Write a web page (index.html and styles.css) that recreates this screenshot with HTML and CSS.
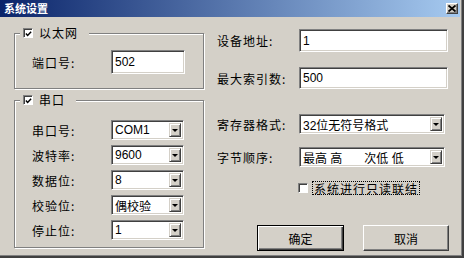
FILE: index.html
```html
<!DOCTYPE html>
<html lang="zh-CN">
<head>
    <meta charset="UTF-8">
    <meta name="viewport" content="width=device-width, initial-scale=1.0">
    <title>系统设置</title>
    <link rel="stylesheet" href="styles.css">
</head>
<body>
    <div class="window">
        <div class="titlebar">
            <span class="title">系统设置</span>
            <span class="close-btn">
                <svg width="8" height="7" viewBox="0 0 8 7"><path d="M0.5 0.5 L7.5 6.5 M7.5 0.5 L0.5 6.5" stroke="#000" stroke-width="1.8"/></svg>
            </span>
        </div>
        <div class="content">
            <div class="left-col">
                <fieldset class="group group-eth">
                    <legend><span class="check"><svg width="8" height="8" viewBox="0 0 8 8"><path d="M1 3.5 L3 5.6 L7 1.4" fill="none" stroke="#000" stroke-width="1.7"/></svg></span>以太网</legend>
                    <div class="row">
                        <span class="lbl">端口号:</span>
                        <div class="edit edit-port">502</div>
                    </div>
                </fieldset>
                <fieldset class="group group-com">
                    <legend><span class="check"><svg width="8" height="8" viewBox="0 0 8 8"><path d="M1 3.5 L3 5.6 L7 1.4" fill="none" stroke="#000" stroke-width="1.7"/></svg></span>串口</legend>
                    <div class="row">
                        <span class="lbl">串口号:</span>
                        <div class="combo combo-small"><span class="value">COM1</span><span class="drop"></span></div>
                    </div>
                    <div class="row">
                        <span class="lbl">波特率:</span>
                        <div class="combo combo-small"><span class="value">9600</span><span class="drop"></span></div>
                    </div>
                    <div class="row">
                        <span class="lbl">数据位:</span>
                        <div class="combo combo-small"><span class="value">8</span><span class="drop"></span></div>
                    </div>
                    <div class="row">
                        <span class="lbl">校验位:</span>
                        <div class="combo combo-small"><span class="value">偶校验</span><span class="drop"></span></div>
                    </div>
                    <div class="row">
                        <span class="lbl">停止位:</span>
                        <div class="combo combo-small"><span class="value">1</span><span class="drop"></span></div>
                    </div>
                </fieldset>
            </div>

            <div class="right-col">
                <div class="rrow rrow-addr">
                    <span class="rlbl">设备地址:</span>
                    <div class="edit edit-wide edit-addr">1</div>
                </div>
                <div class="rrow rrow-index">
                    <span class="rlbl">最大索引数:</span>
                    <div class="edit edit-wide">500</div>
                </div>
                <div class="rrow rrow-format">
                    <span class="rlbl">寄存器格式:</span>
                    <div class="combo combo-wide"><span class="value">32位无符号格式</span><span class="drop"></span></div>
                </div>
                <div class="rrow rrow-order">
                    <span class="rlbl">字节顺序:</span>
                    <div class="combo combo-wide"><span class="value">最高 高<span class="gap"></span>次低 低</span><span class="drop"></span></div>
                </div>
                <div class="rrow rrow-readonly">
                    <span class="check check-plain"></span>
                    <span class="focus-label">系统进行只读联结</span>
                </div>
                <div class="buttons">
                    <div class="btn btn-default">确定</div>
                    <div class="btn">取消</div>
                </div>
            </div>
        </div>
    </div>
</body>
</html>
```

FILE: styles.css
```css
html, body {
    margin: 0;
    padding: 0;
    background-color: #d4d0c8;
}
body {
    font-family: "Liberation Sans", "Noto Sans CJK SC", sans-serif;
    font-size: 12px;
    color: #000;
}
.window {
    width: 464px;
    height: 258px;
    box-sizing: border-box;
    background-color: #d4d0c8;
    border-right: 2px solid #404040;
    border-bottom: 2px solid #404040;
    box-shadow: inset -1px -1px #808080;
    display: flex;
    flex-direction: column;
}
.titlebar {
    height: 17px;
    margin-right: 2px;
    padding: 0 2px 0 4px;
    background: linear-gradient(to right, #0a246a, #a6caf0);
    display: flex;
    align-items: center;
    justify-content: space-between;
}
.title {
    color: #fff;
    font-family: "Noto Sans CJK SC", sans-serif;
    font-weight: bold;
    font-size: 11px;
    line-height: 17px;
}
.close-btn {
    width: 12px;
    height: 11px;
    box-sizing: border-box;
    background-color: #d4d0c8;
    border: 1px solid;
    border-color: #fff #404040 #404040 #fff;
    box-shadow: inset -1px -1px #808080;
    display: flex;
    align-items: center;
    justify-content: center;
}
.content {
    display: flex;
    padding: 9px 0 0 14px;
}
.left-col {
    width: 190px;
}
.group {
    margin: 0;
    padding: 10px 0 14px 0;
    border: 1px solid #808080;
    box-shadow: inset 1px 1px #fff, 1px 1px #fff;
    min-width: 0;
}
.group legend {
    margin-left: 5px;
    padding: 0 11px 0 3px;
    line-height: 14px;
    height: 14px;
    display: flex;
    align-items: center;
    background-color: #d4d0c8;
    font-family: "Noto Sans CJK SC", sans-serif;
    letter-spacing: 1px;
}
.group-com {
    margin-top: 4px;
    padding: 13px 0 7px 0;
}
.group-com .row + .row {
    margin-top: 5px;
}
.check {
    width: 10px;
    height: 10px;
    box-sizing: border-box;
    margin-right: 6px;
    background-color: #fff;
    border: 1px solid;
    border-color: #808080 #fff #fff #808080;
    box-shadow: inset 1px 1px #404040;
    display: flex;
    align-items: center;
    justify-content: center;
}
.check svg {
    margin: 1px 0 0 1px;
}
.row {
    display: flex;
    align-items: center;
    padding-left: 17px;
}
.lbl {
    width: 79px;
    font-family: "Noto Sans CJK SC", sans-serif;
    letter-spacing: 1px;
}
.edit {
    height: 22px;
    box-sizing: border-box;
    padding-left: 3px;
    background-color: #fff;
    border: 1px solid;
    border-color: #808080 #fff #fff #808080;
    box-shadow: inset 1px 1px #404040, inset -1px -1px #d4d0c8;
    display: flex;
    align-items: center;
}
.edit-port {
    width: 74px;
    height: 24px;
}
.combo {
    height: 20px;
    box-sizing: border-box;
    background-color: #fff;
    border: 1px solid;
    border-color: #808080 #fff #fff #808080;
    box-shadow: inset 1px 1px #404040, inset -1px -1px #d4d0c8;
    display: flex;
    align-items: center;
    padding: 2px;
}
.combo .value {
    flex: 1;
    padding-left: 1px;
    font-family: "Liberation Sans", "Noto Sans CJK SC", sans-serif;
    white-space: nowrap;
}
.combo .gap {
    display: inline-block;
    width: 22px;
}
.combo .drop {
    width: 12px;
    align-self: stretch;
    box-sizing: border-box;
    background-color: #d4d0c8;
    border: 1px solid;
    border-color: #d4d0c8 #404040 #404040 #d4d0c8;
    box-shadow: inset 1px 1px #fff, inset -1px -1px #808080;
    display: flex;
    align-items: center;
    justify-content: center;
}
.combo .drop::after {
    content: "";
    border-left: 3px solid transparent;
    border-right: 3px solid transparent;
    border-top: 3px solid #000;
}
.combo-small {
    width: 73px;
}
.right-col {
    margin-left: 13px;
    width: 232px;
    display: flex;
    flex-direction: column;
}
.rrow {
    display: flex;
    align-items: center;
}
.rlbl {
    width: 82px;
    font-family: "Noto Sans CJK SC", sans-serif;
    letter-spacing: 1px;
    white-space: nowrap;
}
.edit-wide {
    width: 149px;
}
.edit-addr {
    height: 23px;
}
.combo-wide {
    width: 146px;
}
.rrow-addr {
    margin-top: 3px;
}
.rrow-index {
    margin-top: 15px;
}
.rrow-format {
    margin-top: 25px;
}
.rrow-order {
    margin-top: 13px;
}
.rrow-readonly {
    margin-top: 14px;
    padding-left: 81px;
}
.check-plain {
    margin-right: 4px;
}
.focus-label {
    height: 14px;
    line-height: 13px;
    padding: 0 1px;
    border: 1px dotted #000;
    font-family: "Noto Sans CJK SC", sans-serif;
    letter-spacing: 1px;
    box-sizing: border-box;
}
.buttons {
    margin-top: 30px;
    padding-left: 40px;
    display: flex;
    gap: 19px;
}
.btn {
    width: 86px;
    height: 26px;
    box-sizing: border-box;
    background-color: #d4d0c8;
    border: 1px solid;
    border-color: #fff #404040 #404040 #fff;
    box-shadow: inset -1px -1px #808080;
    display: flex;
    align-items: center;
    justify-content: center;
    font-family: "Noto Sans CJK SC", sans-serif;
}
.btn-default {
    width: 87px;
    border: 1px solid #000;
    box-shadow: inset 1px 1px #fff, inset -1px -1px #404040, inset -2px -2px #808080;
}
```
